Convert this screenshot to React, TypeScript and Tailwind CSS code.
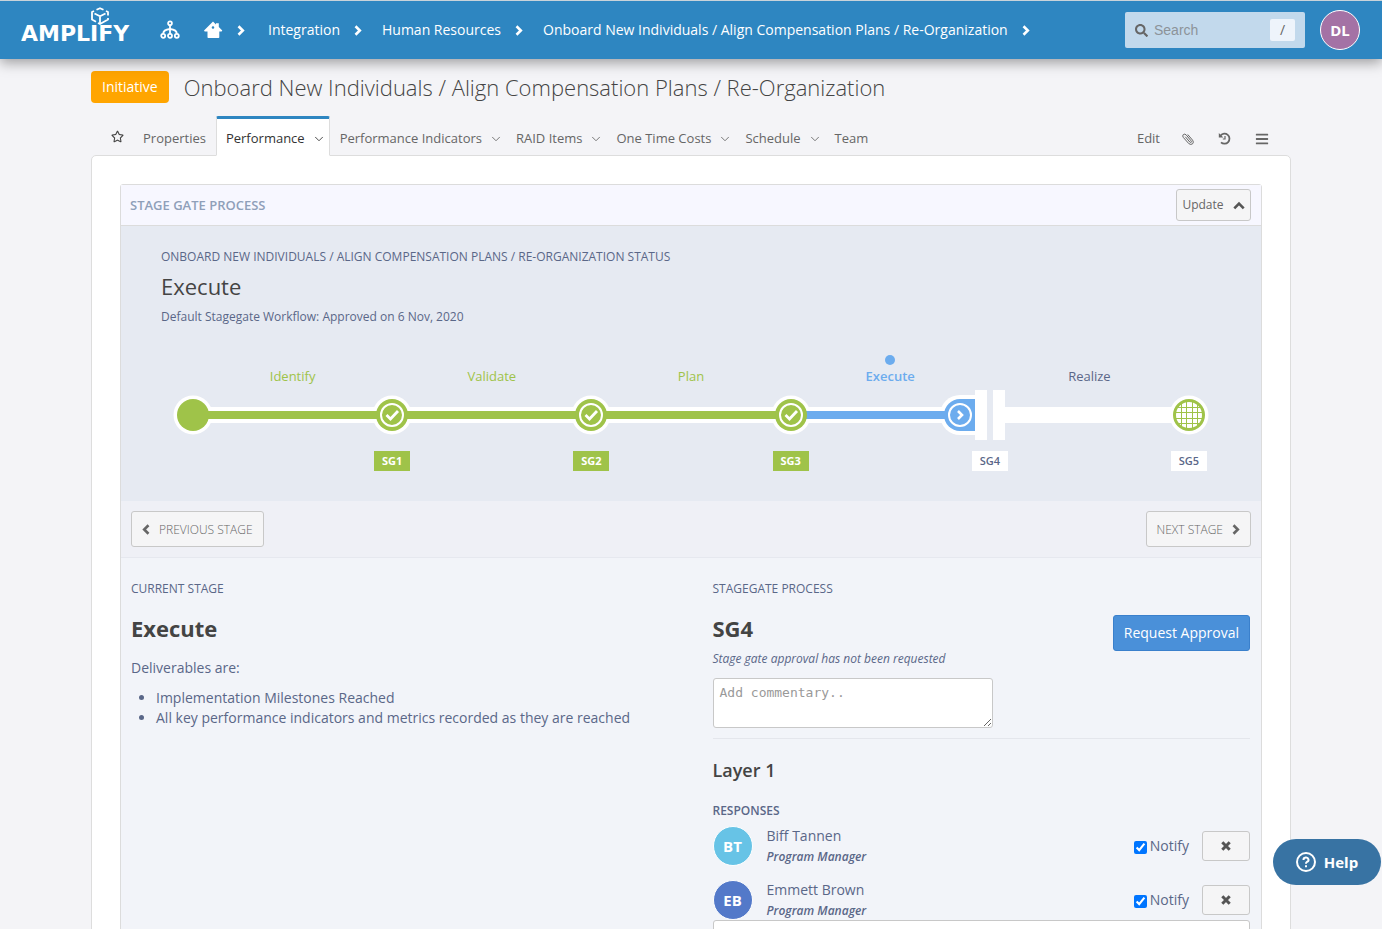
import type { ReactNode } from "react";
import { FaBars, FaRegStar, FaSearch } from "react-icons/fa";
import { FiChevronDown } from "react-icons/fi";

type StageState = "done" | "current" | "upcoming";

type Stage = {
  label: string;
  gate: string;
  state: StageState;
};

type Responder = {
  name: string;
  role: string;
  initials: string;
  color: string;
};

const crumbs = [
  "Integration",
  "Human Resources",
  "Onboard New Individuals / Align Compensation Plans / Re-Organization",
];

const tabs = [
  { label: "Properties", menu: false },
  { label: "Performance", menu: true, active: true },
  { label: "Performance Indicators", menu: true },
  { label: "RAID Items", menu: true },
  { label: "One Time Costs", menu: true },
  { label: "Schedule", menu: true },
  { label: "Team", menu: false },
];

const stages: Stage[] = [
  { label: "Identify", gate: "SG1", state: "done" },
  { label: "Validate", gate: "SG2", state: "done" },
  { label: "Plan", gate: "SG3", state: "done" },
  { label: "Execute", gate: "SG4", state: "current" },
  { label: "Realize", gate: "SG5", state: "upcoming" },
];

const responders: Responder[] = [
  { name: "Biff Tannen", role: "Program Manager", initials: "BT", color: "bg-[#67c3e6]" },
  { name: "Emmett Brown", role: "Program Manager", initials: "EB", color: "bg-[#5379c9]" },
];

function Logo() {
  return (
    <svg width="118" height="40" viewBox="0 0 118 40" role="img" aria-label="Amplify">
      <g fill="none" stroke="#fff" strokeWidth="1.800" strokeLinejoin="round">
        <path d="M75.500 2.800 L79 1.200 L82.500 2.800" />
        <path d="M85 4 L87 5 V8.500" />
        <path d="M73 4 L71 5 V12.500 L75 14.800" />
        <path d="M87 11 V12.500 L79 17 L77 16" />
        <path d="M73.500 6.500 L79 9.300 L84.500 6.500 M79 9.300 V17" />
      </g>
      <text x="0" y="34" fill="#fff" className="font-['DejaVu_Sans'] text-[22px] font-bold">
        AMPLIFY
      </text>
    </svg>
  );
}

function OrgIcon() {
  return (
    <svg width="20" height="20" viewBox="0 0 20 20" fill="none" stroke="#fff" strokeWidth="1.800">
      <circle cx="10" cy="3.200" r="1.900" />
      <circle cx="3.200" cy="15.800" r="2" />
      <circle cx="10" cy="15.800" r="2" />
      <circle cx="16.800" cy="15.800" r="2" />
      <path d="M10 5 V13.800 M3.200 13.800 C3.200 10.800 5 9.500 10 9 C15 9.500 16.800 10.800 16.800 13.800" />
    </svg>
  );
}

function HomeIcon() {
  return (
    <svg width="20" height="18" viewBox="0 0 20 18" fill="#fff">
      <path
        d="M10 .5 L13 3.400 V2.200 H15.800 V6 L19.300 9.600 L18.600 10.600 H16.300 V16.200 Q16.300 17 15.500 17 H5.300 Q4.500 17 4.500 16.200 V10.600 H1.700 L1 9.600 Z M10 5.200 A1.300 1.300 0 1 0 10 7.800 A1.300 1.300 0 1 0 10 5.200 Z"
        fillRule="evenodd"
      />
    </svg>
  );
}

function Chevron({ className = "" }: { className?: string }) {
  return (
    <svg
      width="8"
      height="11"
      viewBox="0 0 8 11"
      fill="none"
      stroke="currentColor"
      strokeWidth="2.600"
      className={`shrink-0 ${className}`}
    >
      <path d="M1.500 1.300 L5.800 5.500 L1.500 9.700" />
    </svg>
  );
}

function CrossIcon() {
  return (
    <svg width="10" height="10" viewBox="0 0 10 10" fill="none" stroke="#555" strokeWidth="3">
      <path d="M1.300 1.300 L8.700 8.700 M8.700 1.300 L1.300 8.700" />
    </svg>
  );
}

function HistoryIcon() {
  return (
    <svg width="13" height="13" viewBox="0 0 13 13" fill="none" stroke="currentColor" strokeWidth="1.800">
      <path d="M2.600 3.500 A5 5 0 1 1 3 10.300" />
      <path d="M7 4 V7 H4.800" strokeWidth="1.200" />
      <path d="M.8 .9 V5.500 H5.400 Z" fill="currentColor" stroke="none" />
    </svg>
  );
}

function PaperclipIcon() {
  return (
    <svg width="12" height="12" viewBox="0 0 12 12" fill="none" stroke="currentColor" strokeLinecap="round">
      <path d="M3.500 4 L7.800 9 Q8.600 9.800 9.200 9.300 Q9.700 8.700 9 7.800 L4.300 2 Q2.800 .4 1.300 1.600 Q.1 2.900 1.300 4.400 L6.800 10.600 Q8.900 12.200 10.600 10.800 Q12.100 9.200 10.600 7.200 L6 1.800" />
    </svg>
  );
}

function GateNode() {
  return (
    <svg width="100" height="50" viewBox="0 0 100 50">
      <path d="M35 5 H20 A20 20 0 0 0 20 45 H35 Z" fill="#fff" />
      <path d="M35 9 H20 A16 16 0 0 0 20 41 H35 Z" fill="#6cacee" />
      <rect x="0" y="21" width="8" height="8" fill="#6cacee" />
      <circle cx="20" cy="25" r="11" fill="none" stroke="#fff" strokeWidth="2" />
      <path d="M18 21 L22 25 L18 29" fill="none" stroke="#fff" strokeWidth="2.600" />
      <rect x="35" y="0" width="30" height="50" fill="#e6eaf2" />
      <rect x="35" y="0" width="12" height="50" fill="#fff" />
      <rect x="53" y="0" width="12" height="50" fill="#fff" />
    </svg>
  );
}

function StageNode({ state, next }: { state: StageState | "start"; next?: StageState }) {
  if (state === "current") return <GateNode />;
  return (
    <svg width="40" height="50" viewBox="0 0 40 50">
      <circle cx="20" cy="25" r="19.500" fill="#fff" />
      {/* the track runs through the white ring */}
      {state === "done" && <rect x="0" y="21" width="8" height="8" fill="#9fc349" />}
      {next && <rect x="32" y="21" width="8" height="8" fill={next === "current" ? "#6cacee" : "#9fc349"} />}
      {state === "upcoming" ? (
        <>
          <circle cx="20" cy="25" r="14.500" fill="#fff" stroke="#9fc349" strokeWidth="3" />
          <path
            d="M12.500 14 V36 M17.500 11 V39 M23.500 11 V39 M28.500 14 V36 M9 17.500 H31 M7 22.500 H33 M7 28.500 H33 M9 33.500 H31"
            stroke="#9fc349"
            strokeWidth="1"
          />
        </>
      ) : (
        <circle cx="20" cy="25" r="16" fill="#9fc349" />
      )}
      {state === "done" && (
        <>
          <circle cx="20" cy="25" r="11" fill="none" stroke="#fff" strokeWidth="2" />
          <path d="M14.500 25 L18.500 29 L26 21" fill="none" stroke="#fff" strokeWidth="2.800" />
        </>
      )}
    </svg>
  );
}

const labelStyles: Record<StageState, string> = {
  done: "font-medium text-[#9fc349]",
  current: "font-semibold text-[#6cacee]",
  upcoming: "text-[#5a6788]",
};

const barStyles: Record<StageState, string> = {
  done: "bg-[#9fc349]",
  current: "bg-[#6cacee]",
  upcoming: "bg-white",
};

const badgeStyles: Record<StageState, string> = {
  done: "bg-[#9fc349] text-white font-bold",
  current: "bg-white text-[#5a6788] font-semibold",
  upcoming: "bg-white text-[#5a6788] font-semibold",
};

function Timeline() {
  return (
    <ol className="mt-[26px] grid grid-cols-5 px-[72px]">
      {stages.map((stage, i) => (
        <li key={stage.gate} className="relative">
          <div className="flex h-[34px] flex-col items-center justify-end">
            {stage.state === "current" && <span className="size-[10px] rounded-full bg-[#6cacee]" />}
            <span className={`text-[13px] leading-[22px] ${labelStyles[stage.state]}`}>{stage.label}</span>
          </div>
          <div className="mt-5 flex h-4 items-center bg-white">
            <div className={`h-2 w-full ${barStyles[stage.state]}`} />
          </div>
          {i === 0 && (
            <div className="absolute top-[37px] left-0 z-10 -translate-x-1/2">
              <StageNode state="start" next="done" />
            </div>
          )}
          <div className="absolute top-[37px] right-0 z-10 translate-x-1/2">
            <StageNode state={stage.state} next={stages[i + 1]?.state} />
          </div>
          <div className="mt-7 flex justify-end">
            <span className={`w-9 translate-x-1/2 text-center text-[11px] leading-5 ${badgeStyles[stage.state]}`}>
              {stage.gate}
            </span>
          </div>
        </li>
      ))}
    </ol>
  );
}

function OutlineButton({ className, label, children }: { className: string; label?: string; children: ReactNode }) {
  return (
    <button
      aria-label={label}
      className={`flex items-center justify-center rounded-[3px] border border-[#c8c8c8] bg-[#f5f5f6] text-[#666] ${className}`}
    >
      {children}
    </button>
  );
}

function ResponderRow({ name, role, initials, color }: Responder) {
  return (
    <li className="flex h-[54px] items-start">
      <span
        className={`mt-1 flex size-10 shrink-0 items-center justify-center rounded-full border border-white text-[15px] font-bold text-white ${color}`}
      >
        {initials}
      </span>
      <div className="ml-[14px] flex-1">
        <p className="pt-1 text-sm leading-5">{name}</p>
        <p className="pt-px text-xs leading-5 font-semibold italic">{role}</p>
      </div>
      <label className="mt-[14px] mr-[13px] flex items-center gap-[3px] text-sm leading-5">
        <input type="checkbox" defaultChecked className="mt-[2px] size-[13px]" />
        Notify
      </label>
      <OutlineButton label={`Remove ${name}`} className="mt-[9px] h-[30px] w-12">
        <CrossIcon />
      </OutlineButton>
    </li>
  );
}

export default function App() {
  return (
    <div className="flex h-screen flex-col overflow-hidden bg-[#f4f4f7] font-['Open_Sans',sans-serif] text-[#5a6788]">
      <header className="z-20 flex h-[59px] shrink-0 items-center border-t border-[#c9d3da] bg-[#2e86c1] pr-[22px] pl-[21px] text-white shadow-[0_4px_12px_rgba(0,0,0,0.35)]">
        <a href="#" className="-mt-[6px]">
          <Logo />
        </a>
        <a href="#" aria-label="Organization" className="ml-[21px]">
          <OrgIcon />
        </a>
        <a href="#" aria-label="Home" className="ml-[23px]">
          <HomeIcon />
        </a>
        <Chevron className="ml-[14px]" />
        <nav className="ml-[23px] flex flex-1 gap-[20px]">
          {crumbs.map((crumb) => (
            <a key={crumb} href="#" className="flex items-center gap-[14px] text-sm font-medium whitespace-nowrap">
              {crumb}
              <Chevron />
            </a>
          ))}
        </nav>
        <div className="flex h-9 w-[180px] shrink-0 items-center rounded-[2px] bg-[#c2d9ec] px-[10px]">
          <FaSearch size={13} className="shrink-0 text-[#666]" />
          <input
            type="text"
            aria-label="Search"
            placeholder="Search"
            className="ml-[6px] w-full min-w-0 font-['Liberation_Sans',sans-serif] text-sm outline-none placeholder:text-[#8c9399]"
          />
          <kbd className="flex h-[22px] w-[25px] shrink-0 items-center justify-center rounded-[2px] bg-[#eef4fb] font-['Open_Sans',sans-serif] text-sm text-[#666]">
            /
          </kbd>
        </div>
        <button className="ml-[15px] size-10 shrink-0 rounded-full border border-white bg-[#a472a5] text-[15px] font-bold">
          DL
        </button>
      </header>

      <main className="mx-auto w-full max-w-[1200px]">
        <div className="flex items-center pt-3">
          <span className="rounded-[4px] bg-[#ffa500] px-[11px] text-sm leading-8 font-medium text-white">Initiative</span>
          <h1 className="ml-[15px] text-[22px] leading-8 font-light text-[#444]">
            Onboard New Individuals / Align Compensation Plans / Re-Organization
          </h1>
        </div>

        <div className="mt-[13px] flex h-10 items-stretch pr-[22px] pl-5 text-[13px] text-[#666]">
          <button aria-label="Favourite" className="mr-[9px] text-[#444]">
            <FaRegStar size={13} />
          </button>
          <nav className="flex flex-1">
            {tabs.map((tab) => (
              <a
                key={tab.label}
                href="#"
                className={
                  tab.active
                    ? "relative z-10 flex items-center gap-[7px] rounded-t-[2px] border border-t-[3px] border-[#ddd] border-t-[#2e86c1] border-b-white bg-white pt-1 pr-[3px] pl-[9px] text-[#333]"
                    : tab.menu
                      ? "flex items-center gap-[7px] border border-t-[3px] border-transparent pt-1 pr-[2px] pl-[9px]"
                      : "flex items-center border border-t-[3px] border-transparent pt-1 pr-[9px] pl-[9px]"
                }
              >
                {tab.label}
                {tab.menu && <FiChevronDown size={14} strokeWidth={1.5} />}
              </a>
            ))}
          </nav>
          <div className="flex items-center gap-[22px] pt-[5px]">
            <a href="#">Edit</a>
            <button aria-label="Attachments">
              <PaperclipIcon />
            </button>
            <button aria-label="History" className="pl-[2px]">
              <HistoryIcon />
            </button>
            <button aria-label="Menu" className="pl-[2px]">
              <FaBars size={14} />
            </button>
          </div>
        </div>

        <div className="-mt-px rounded-t-[5px] border border-[#ddd] bg-white px-7 pt-7">
          <section className="rounded-t-[3px] border border-[#dcdcdc] bg-[#f2f4f9]">
            <div className="flex h-[41px] items-center justify-between border-b border-[#dcdcdc] bg-[#f7f7ff] pr-[10px] pl-[9px]">
              <h2 className="pt-[2px] text-[13px] font-semibold text-[#8f9fb9]">STAGE GATE PROCESS</h2>
              <OutlineButton className="h-8 w-[75px] gap-[9px] text-xs">
                Update
                <svg width="12" height="9" viewBox="0 0 12 9" fill="none" stroke="#555" strokeWidth="2.600">
                  <path d="M1.300 7.300 L6 2.500 L10.700 7.300" />
                </svg>
              </OutlineButton>
            </div>

            <div className="bg-[#e6eaf2] pt-[21px] pb-[30px]">
              <div className="px-10">
                <p className="text-xs leading-5">
                  ONBOARD NEW INDIVIDUALS / ALIGN COMPENSATION PLANS / RE-ORGANIZATION STATUS
                </p>
                <h3 className="mt-px text-[22px] leading-9 text-[#444]">Execute</h3>
                <p className="mt-[3px] text-xs leading-5">Default Stagegate Workflow: Approved on 6 Nov, 2020</p>
              </div>
              <Timeline />
            </div>

            <div className="flex h-[57px] items-center justify-between border-b border-[#e6e8ef] bg-[#eff0f6] px-[10px]">
              <OutlineButton className="h-9 gap-[9px] px-[10px] text-xs font-light">
                <Chevron className="rotate-180" />
                <span className="pt-[2px]">PREVIOUS STAGE</span>
              </OutlineButton>
              <OutlineButton className="h-9 gap-[9px] px-[10px] text-xs font-light">
                <span className="pt-[2px]">NEXT STAGE</span>
                <Chevron />
              </OutlineButton>
            </div>

            <div className="grid grid-cols-2 gap-11 pt-[21px] pr-[11px] pl-[10px]">
              <div>
                <p className="text-xs leading-5">CURRENT STAGE</p>
                <h3 className="mt-[13px] text-[22px] leading-8 font-bold text-[#444]">Execute</h3>
                <p className="mt-[14px] text-sm leading-5">Deliverables are:</p>
                <ul className="mt-[10px] list-disc pl-[25px] text-sm leading-5">
                  <li>Implementation Milestones Reached</li>
                  <li>All key performance indicators and metrics recorded as they are reached</li>
                </ul>
              </div>

              <div>
                <p className="text-xs leading-5">STAGEGATE PROCESS</p>
                <div className="mt-[13px] flex items-start justify-between">
                  <div>
                    <h3 className="text-[22px] leading-8 font-bold text-[#444]">SG4</h3>
                    <p className="mt-[5px] text-xs leading-5 italic">Stage gate approval has not been requested</p>
                  </div>
                  <button className="mt-[3px] h-9 rounded-[3px] border border-[#3a80cc] bg-[#4a90d9] px-[10px] text-sm font-medium text-white">
                    Request Approval
                  </button>
                </div>
                <textarea
                  aria-label="Commentary"
                  placeholder="Add commentary.."
                  className="mt-[9px] block h-[50px] w-[280px] rounded-[3px] border border-[#c8c8c8] bg-white px-[6px] py-1 font-['DejaVu_Sans_Mono',monospace] text-[13px] leading-5 placeholder:text-[#999]"
                />
                <hr className="mt-[10px] border-t-[#e4e6ec]" />
                <h4 className="mt-[19px] text-lg leading-6 font-semibold text-[#444]">Layer 1</h4>
                <p className="mt-[19px] text-xs leading-5 font-semibold">RESPONSES</p>
                <ul className="h-[99px] pt-px">
                  {responders.map((responder) => (
                    <ResponderRow key={responder.name} {...responder} />
                  ))}
                </ul>
                <textarea
                  aria-label="Response"
                  className="relative block h-20 w-full resize-none rounded-[3px] border border-[#c8c8c8] bg-white"
                />
              </div>
            </div>
          </section>
        </div>
      </main>

      <button className="fixed right-px bottom-11 z-30 flex h-[46px] w-[108px] items-center justify-center gap-2 rounded-full bg-[#3873a3] text-[15px] font-bold text-white">
        <svg width="20" height="20" viewBox="0 0 20 20" fill="none" stroke="#fff" strokeWidth="2">
          <circle cx="10" cy="10" r="9" />
          <path d="M7.500 8 A2.500 2.300 0 1 1 10.800 10 Q10 10.500 10 11.800" />
          <path d="M10 13.200 V15.200" />
        </svg>
        Help
      </button>
    </div>
  );
}
